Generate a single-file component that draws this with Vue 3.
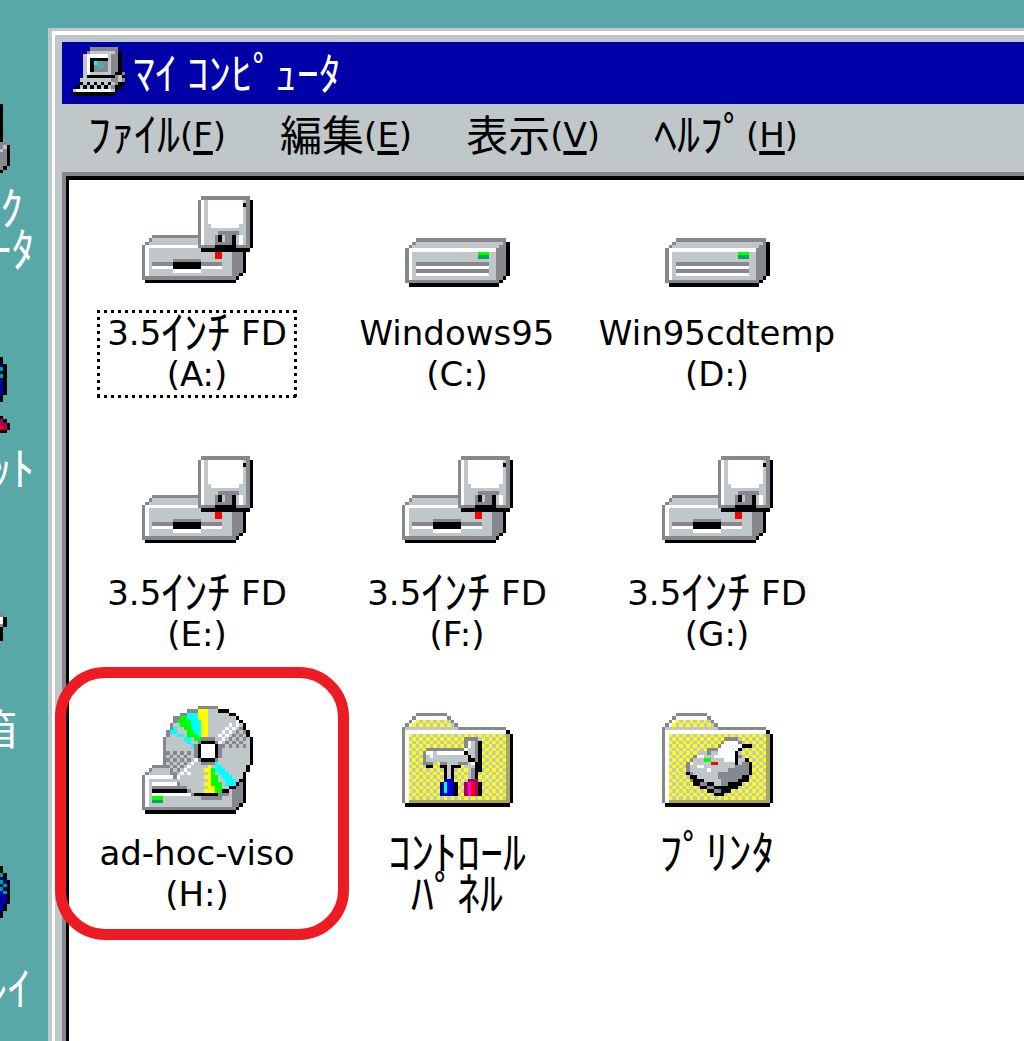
<script setup>
import { h } from 'vue'

const palette = {
  k: '#000000', d: '#87888f', l: '#c0c7c8', w: '#ffffff', y: '#ffff00', g: '#00ff00', G: '#00a858',
  c: '#00ffff', T: '#58a8a8', r: '#ff0000', b: '#0000ff', n: '#0000a8', o: '#a8a858', m: '#a80058', p: '#ff00ff',
}
// two-colour dither patterns
const dither = { t: ['y', 'l'], s: ['d', 'l'], v: ['w', 'l'], x: ['k', 'l'] }

// Each line is one pixel row, written as runs: a colour letter and a length, "." being empty.
function art(rows, top = 0, left = 0) {
  const paths = {}
  const put = (c, x, y, n) => { paths[c] = (paths[c] || '') + `M${x} ${y}h${n}v1h-${n}z` }
  rows.trim().split('\n').forEach((row, i) => {
    let x = left
    const y = top + i
    for (const [, c, len] of row.matchAll(/([a-zA-Z.])(\d+)/g)) {
      const n = Number(len)
      if (dither[c]) for (let j = 0; j < n; j++) put(dither[c][(x + j + y) % 2], x + j, y, 1)
      else if (c !== '.') put(c, x, y, n)
      x += n
    }
  })
  return Object.entries(paths).map(([c, d]) => ({ fill: palette[c], d }))
}

const Sprite = (props) => h('svg', { viewBox: props.box || '0 0 32 32', 'shape-rendering': 'crispEdges', 'aria-hidden': 'true' },
  props.art.map((p) => h('path', p)))
Sprite.props = ['art', 'box']

const floppy = art(`
.17 d14
.16 d1 w1 l1 w10 l1 d1 k1
.16 d1 w1 l1 w10 k1 d1 k1
.16 d1 w1 l1 w10 l1 d1 k1
.16 d1 w1 l1 w10 l1 d1 k1
.16 d1 w1 l1 w10 l1 d1 k1
.16 d1 w1 l1 w10 l1 d1 k1
.16 d1 w1 l1 w10 l1 d1 k1
.16 d1 w1 l2 w8 l2 d1 k1
.16 d1 w1 l12 d1 k1
.16 d1 w1 l4 d6 l2 d1 k1
.3 d14 w1 l3 d1 k1 l1 d2 k1 l1 w1 l1 d1 k1
.2 d1 l13 d1 w1 l3 d1 k1 l1 d2 k1 l1 w1 l1 d1 k1
.1 d1 l14 d1 w1 l3 d5 k1 l1 w1 l1 d1 k1
d1 w15 d5 k6 d4 k1
d1 w1 l15 k14
d1 w1 l19 r2 l3 d3 k1
d1 w1 l19 r2 l3 d3 k1
d1 w1 l7 d8 l9 d3 k1
d1 w1 l1 d6 k8 d6 l3 d3 k1
d1 w1 l1 w6 k8 w6 l3 d3 k1
d1 w1 l7 w8 l9 d3 k1
d1 w1 l24 d2 k1
d27 k1
.1 k26`, 3)

const disk = art(`
.3 d26
.2 d1 l25 d1 k1
.1 d1 l25 d2 k1
d1 w25 d3 k1
d1 w1 l19 g3 l2 d3 k1
d1 w1 l19 G3 l2 d3 k1
d1 w1 l24 d3 k1
d1 w1 l1 d21 l2 d3 k1
d1 w1 l1 w21 l2 d3 k1
d1 w1 l1 d21 l2 d3 k1
d1 w1 l1 w21 l2 d3 k1
d1 w1 l24 d2 k1
d27 k1
.1 k26`, 15, 1)

const disc = art(`
.16 d6
.13 d3 y3 l3 k3
.11 d2 c3 y3 l6 k2
.9 d2 g2 c3 y3 l8 k1
.9 d1 g4 c3 y2 l8 w1 k1
.8 d1 l2 g3 c3 y2 l6 v4 k1
.8 d1 c1 l2 g2 c3 y2 l5 v4 d1 k1
.7 d1 c2 l3 g2 c2 y2 l4 v3 s4 k1
.7 d1 l2 c2 l1 g3 c1 y2 l3 v4 s4 k1
.6 d1 l5 c2 l1 g2 d4 l1 v2 s6 l1 k1
.6 d1 l6 c1 l2 d1 k4 d1 v2 s6 l1 k1
.6 d1 l7 c1 d1 k1 w4 k1 d1 s7 l1 k1
.6 d1 l8 d1 k1 w4 k1 d1 l8 k1
.6 d1 s7 l1 d1 k1 w4 k1 d1 l8 k1
.6 d1 s7 l1 d1 k1 w4 k1 d1 l8 k1
.6 d1 s7 v2 d1 k4 d1 l9 k1
.6 d1 s6 v3 l1 d4 c1 l9 k1
.3 d5 s4 v3 l3 l1 y1 l1 c2 l7 k1
.2 d1 l5 d1 s3 v2 l4 y2 g1 c3 l6 k1
.1 d1 l6 d1 s2 v3 l5 y1 g1 l1 c3 l4 k1
d1 w8 d1 v2 l6 y2 g2 l1 c3 l3 k1
d1 w1 l8 v1 l8 y1 g2 l2 c3 l1 k2
d1 w1 l1 w7 d1 l7 y2 g3 l1 c3 k1 d1 k1
d1 w1 l1 d10 l6 y2 g2 l2 k2 d2 k1
d1 w1 l1 k10 d1 l4 y3 g2 k2 l1 d3 k1
d1 w1 l1 w11 d1 k7 d3 l1 d3 k1
d1 w1 l1 g3 l11 d6 l3 d3 k1
d1 w1 l1 G3 l20 d3 k1
d1 w1 l24 d2 k1
d27 k1
.1 k26`)

const folder = art(`
.4 d9
.3 d1 w9 d1
.2 d1 w1 t10 d1
.1 d1 w1 t12 d1
d1 l15 d14
d1 w29 k1
${'d1 w1 t28 o1 k1\n'.repeat(19)}d1 w1 o29 k1
.1 k30`, 2)

const control = [...folder, ...art(`
.18 d4
.18 d1 w1 l1 d1 k1
.18 d1 w1 l1 d1 k1
.7 d11 w1 l2 d1 k1
.6 d1 w2 l1 w8 k1 l2 d1 k1
.6 d1 l1 w1 l10 k1 l1 d1 k1
.6 d1 l12 k2 d1 k1
.6 d3 .2 d2 l3 d3 l1 w1 k2
.7 k2 .2 k2 l1 k3 .2 l2 k2
.12 k1 l1 k1 .4 l1 d1 k2
.12 k1 l1 k1 .4 l1 d1 k1
.12 k1 l1 k1 .4 l1 d1 k1
.12 n3 .4 m3
.11 n1 c1 b1 n1 k1 .2 m1 p1 r1 m1 k1
.11 n1 c1 b1 n1 k1 .2 m1 p1 r1 m1 k1
.11 n1 c1 b1 n1 k1 .2 m1 p1 r1 m1 k1
.11 n1 b2 n1 k1 .2 m1 p1 r1 m1 k1`, 9)]

const printer = [...folder, ...art(`
.18 d4
.17 d1 w4 d1
.16 d1 w6 k3
.13 d3 w6 k1
.11 l2 d1 l2 w5 k1
.9 d1 w2 l3 w6 k1 d1
.8 d1 l3 g2 l4 w3 k1 l2 k1
.7 d1 w1 l5 r2 l5 k1 l1 d2 k1
.7 d1 l2 w2 l9 d4 k1
.7 d1 l5 w1 l5 d6 k1
.7 k1 d1 l7 d9 k1
.8 k2 l6 d7 k2
.8 d1 k3 l5 d5 k3
.9 k2 d2 k2 l2 d2 k4
.11 k2 d2 k5 k2
.13 k2 d2 k3
.15 k3`, 9)]

const pc = art(`
.5 d8
.4 d1 l7 d1 k1
.3 l1 w6 l1 d2 k1
.3 l1 w1 k5 l1 d2 k1
.3 l1 w1 k1 c1 T2 d1 l1 d2 k1
.3 l1 w1 k1 d1 T2 d1 l1 d2 k1
.3 l1 w1 k1 d4 l1 d2 k1
.3 l1 w1 l6 d1 k2 d2
.3 l1 k8 d1 l1 k1
.2 l9 d2 l1 d1 k1
.2 x9 l1 d1 k2
.1 x10 d1 k2
l1 w10 l1 k1
k12`)

const network = art(`
${'k1\n'.repeat(11)}d2
d1 l1 k1
l1 d1 k1
d2 k1
d2 k1
d2 k1
d2 k1
d1 k1
k1`, 12, 29)
const internet = art(`
k1
k1
n1 k1
G1 k1
n1 k1
G1 k1
n1 k1
n1 k1
n1 k1
n1 k1
n1 k1
k1
k1
.1
.1
.1
.1
k1
m1 k1
m2 k1
r1 m1 k1
k2`, 10, 29)
const bin = art(`
d1
w1 k1
w1 k1
d1 k1
k1
k1
k1
k1`, 9, 29)
const inbox = art(`
k1
k1
G1 k1
n1 k1
G1 n1 k1
n1 G1 k1
G1 n1 k1
b1 G1 k1
n2 k1
n2 k1
n2 k1
n1 k1
n1 k1
k1
k1`, 7, 29)

// a label line is a list of [script, text] runs
const kana = (text) => ['kana', text]
const kanji = (text) => ['kanji', text]
const latin = (text) => ['latin', text]

const desktop = [
  { art: network, lines: [[kana('ﾈｯﾄﾜｰｸ')], [kana('ｺﾝﾋﾟｭｰﾀ')]] },
  { art: internet, lines: [[kana('ｲﾝﾀｰﾈｯﾄ')]] },
  { art: bin, lines: [[kanji('ごみ箱')]] },
  { art: inbox, lines: [[kanji('受信'), kana('ﾄﾚｲ')]] },
]
const menus = [[kana('ﾌｧｲﾙ'), 'F'], [kanji('編集'), 'E'], [kanji('表示'), 'V'], [kana('ﾍﾙﾌﾟ'), 'H']]
const fd = (letter, focus) => ({
  art: floppy, focus, lines: [[latin('3.5'), kana('ｲﾝﾁ'), latin(' FD')], [latin(`(${letter}:)`)]],
})
const drives = [
  fd('A', true),
  { art: disk, lines: [[latin('Windows95')], [latin('(C:)')]] },
  { art: disk, lines: [[latin('Win95cdtemp')], [latin('(D:)')]] },
  fd('E'), fd('F'), fd('G'),
  { art: disc, lines: [[latin('ad-hoc-viso')], [latin('(H:)')]], marked: true },
  { art: control, lines: [[kana('ｺﾝﾄﾛｰﾙ')], [kana('ﾊﾟﾈﾙ')]] },
  { art: printer, lines: [[kana('ﾌﾟﾘﾝﾀ')]] },
]
</script>

<template>
  <div class="screen">
    <aside class="desktop">
      <button v-for="(d, i) in desktop" :key="i" class="shortcut" type="button">
        <Sprite class="icon" :art="d.art" />
        <span class="label">
          <span v-for="(line, j) in d.lines" :key="j" class="line"><span v-for="[script, text] in line" :key="text" :class="script">{{ text }}</span></span>
        </span>
      </button>
    </aside>
    <main class="window">
      <div class="frame">
        <header class="title">
          <Sprite class="pc" :art="pc" box="0 0 15 14" />
          <h1>ﾏｲ ｺﾝﾋﾟｭｰﾀ</h1>
        </header>
        <nav class="menu">
          <button v-for="[[script, name], key] in menus" :key="key" type="button"><span :class="script">{{ name }}</span>(<u>{{ key }}</u>)</button>
        </nav>
        <section class="client">
          <button v-for="(d, i) in drives" :key="i" class="item" type="button">
            <Sprite class="icon" :art="d.art" />
            <span class="label" :class="{ focus: d.focus }">
              <span v-for="(line, j) in d.lines" :key="j" class="line"><span v-for="[script, text] in line" :key="text" :class="script">{{ text }}</span></span>
            </span>
            <span v-if="d.marked" class="marker"></span>
          </button>
        </section>
      </div>
    </main>
  </div>
</template>

<style>
body { margin: 0; background: #58a8a8; }
</style>

<style scoped>
.screen {
  display: flex;
  height: 100vh;
  overflow: hidden;
  background: #58a8a8;
  color: #000;
  font: 34px/41px "DejaVu Sans", "Noto Sans CJK JP", sans-serif;
}
button {
  margin: 0;
  padding: 0;
  border: 0;
  background: none;
  color: inherit;
  font: inherit;
}
.kana,
.kanji {
  font-family: "Noto Sans CJK JP", sans-serif;
  font-size: 46px;
  line-height: 0;
  vertical-align: -4px;
}
.kanji { font-size: 42px; }
.desktop {
  flex: none;
  display: flex;
  flex-direction: column;
  align-items: flex-end;
  width: 48px;
  padding-top: 62px;
  box-sizing: border-box;
  overflow: hidden;
  color: #fff;
}
.shortcut {
  flex: none;
  display: flex;
  flex-direction: column;
  align-items: center;
  gap: 16px;
  width: 188px;
  height: 260px;
}
.icon {
  flex: none;
  width: 111px;
  height: 111px;
}
.label { text-align: center; }
.line {
  display: block;
  height: 41px;
  white-space: pre;
}
.window {
  flex: 1;
  min-width: 0;
  margin-top: 28px;
  padding: 3px 0 0 4px;
  background: #c0c7c8;
}
.frame {
  display: flex;
  flex-direction: column;
  height: 100%;
  box-sizing: border-box;
  padding: 7px 0 0 7px;
  border: solid #fff;
  border-width: 4px 0 0 3px;
}
.title {
  display: flex;
  align-items: center;
  gap: 8px;
  height: 62px;
  box-sizing: border-box;
  padding: 0 0 4px 11px;
  background: #0000a8;
  color: #fff;
}
.title h1 {
  margin: 0;
  font: 44px/50px "Noto Sans CJK JP", sans-serif;
  white-space: pre;
}
.pc {
  width: 52px;
  height: 49px;
}
.menu {
  display: flex;
  gap: 54px;
  height: 69px;
  padding-left: 26px;
}
.menu button { height: 62px; }
.menu u {
  text-decoration-thickness: 4px;
  text-underline-offset: 4px;
}
.client {
  flex: 1;
  display: grid;
  grid-template-columns: repeat(3, 256px);
  grid-auto-rows: 260px;
  column-gap: 4px;
  align-content: start;
  padding-top: 6px;
  border: solid #000;
  border-width: 4px 0 0 3px;
  outline: 4px solid #87888f;
  margin: 3px 0 0 4px;
  background: #fff;
}
.item {
  position: relative;
  display: flex;
  flex-direction: column;
  align-items: center;
  gap: 16px;
}
.focus {
  margin: -3px 0;
  padding: 3px 10px;
  background:
    repeating-linear-gradient(90deg, #000 0 3px, transparent 3px 7px) top / 100% 3px no-repeat,
    repeating-linear-gradient(90deg, #000 0 3px, transparent 3px 7px) bottom / 100% 3px no-repeat,
    repeating-linear-gradient(#000 0 3px, transparent 3px 7px) left / 3px 100% no-repeat,
    repeating-linear-gradient(#000 0 3px, transparent 3px 7px) right / 3px 100% no-repeat;
}
.marker {
  position: absolute;
  inset: -39px -24px 26px -14px;
  border: 11px solid #ed1c24;
  border-radius: 50px;
}
</style>
